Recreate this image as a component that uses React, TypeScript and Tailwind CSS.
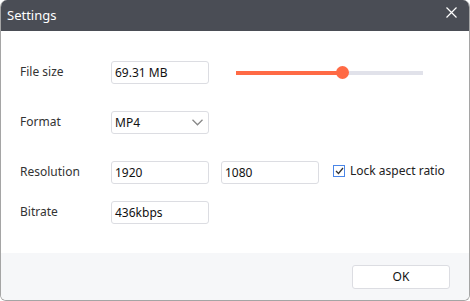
import React from "react";

function Field({ value, w = "w-[98px]" }: { value: string; w?: string }) {
  return (
    <div className={`${w} h-[23px] border border-[#dcdde2] rounded-[3px] bg-white flex items-center pl-[3px] text-[12px] text-[#111]`}>
      {value}
    </div>
  );
}

export default function App() {
  return (
    <div className="w-[470px] h-[301px] flex flex-col bg-white border border-[#a5a5a5] border-t-0 rounded-t-[7px] rounded-b-[6px] overflow-hidden" style={{ fontFamily: '"Noto Sans", "Open Sans", sans-serif' }}>
      <div className="h-[31px] bg-[#4a4d55] flex items-center justify-between pl-[6px] pr-[12px] shrink-0">
        <span className="text-white text-[13px] mt-[1px]">Settings</span>
        <svg width="11" height="11" viewBox="0 0 11 11" className="mt-[-7px]">
          <path d="M0.5 0.5 L10.5 10.5 M10.5 0.5 L0.5 10.5" stroke="#fff" strokeWidth="1.2" />
        </svg>
      </div>
      <div className="flex-1 flex flex-col pl-[19px] pt-[30px] text-[12px] text-[#333]">
        <div className="flex items-center h-[23px]">
          <span className="w-[91px] mt-[-2px]">File size</span>
          <Field value="69.31 MB" />
          <div className="ml-[27px] w-[187px] h-[4px] bg-[#e1e2ea] relative">
            <div className="absolute left-0 top-0 h-[4px] w-[106px] bg-[#ff6a45]" />
            <div className="absolute left-[100px] top-[-4.5px] w-[13px] h-[13px] rounded-full bg-[#ff6a45]" />
          </div>
        </div>
        <div className="flex items-center h-[23px] mt-[27px]">
          <span className="w-[91px] mt-[-2px]">Format</span>
          <div className="w-[98px] h-[23px] border border-[#dcdde2] rounded-[3px] flex items-center justify-between pl-[3px] pr-[5px] text-[#111]">
            <span>MP4</span>
            <svg width="11" height="7" viewBox="0 0 11 7">
              <path d="M0.5 0.8 L5.5 5.8 L10.5 0.8" stroke="#888" strokeWidth="1.3" fill="none" />
            </svg>
          </div>
        </div>
        <div className="flex items-center h-[23px] mt-[27px]">
          <span className="w-[91px] mt-[-2px]">Resolution</span>
          <Field value="1920" />
          <div className="ml-[12px]"><Field value="1080" /></div>
          <div className="ml-[14px] flex items-center mt-[-4px]">
            <div className="w-[12px] h-[12px] border border-[#4a86e8] flex items-center justify-center bg-white">
              <svg width="9" height="8" viewBox="0 0 9 8">
                <path d="M1 4 L3.5 6.5 L8 1" stroke="#333" strokeWidth="1.3" fill="none" />
              </svg>
            </div>
            <span className="ml-[5px] text-[12px] text-[#222]">Lock aspect ratio</span>
          </div>
        </div>
        <div className="flex items-center h-[23px] mt-[17px]">
          <span className="w-[91px] mt-[-2px]">Bitrate</span>
          <Field value="436kbps" />
        </div>
      </div>
      <div className="h-[47px] bg-[#f6f7f9] flex items-center justify-end pr-[19px] shrink-0">
        <div className="w-[98px] h-[24px] mt-[1px] bg-white border border-[#dcdde2] rounded-[3px] flex items-center justify-center text-[12px] text-[#111]">
          OK
        </div>
      </div>
    </div>
  );
}
